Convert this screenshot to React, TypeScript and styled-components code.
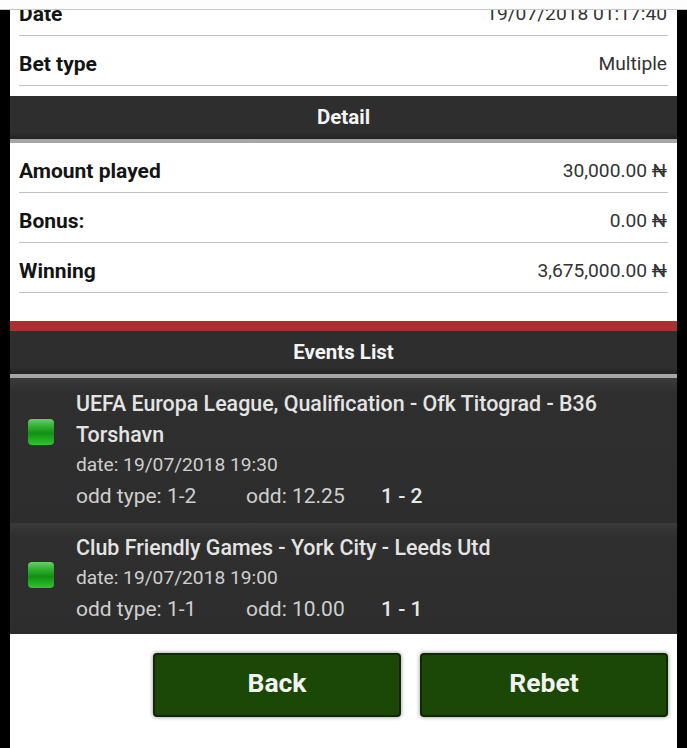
import styled, { createGlobalStyle } from "styled-components";

const GlobalStyle = createGlobalStyle`
  html, body {
    margin: 0;
    padding: 0;
    background: #000;
    font-family: Roboto, "Liberation Sans", sans-serif;
  }
`;

const summary = [
  { label: "Amount played", value: "30,000.00 ₦" },
  { label: "Bonus:", value: "0.00 ₦" },
  { label: "Winning", value: "3,675,000.00 ₦" },
];

const events = [
  {
    title: "UEFA Europa League, Qualification - Ofk Titograd - B36 Torshavn",
    date: "date: 19/07/2018 19:30",
    oddType: "odd type: 1-2",
    odd: "odd: 12.25",
    score: "1 - 2",
  },
  {
    title: "Club Friendly Games - York City - Leeds Utd",
    date: "date: 19/07/2018 19:00",
    oddType: "odd type: 1-1",
    odd: "odd: 10.00",
    score: "1 - 1",
  },
];

export default function App() {
  return (
    <>
      <GlobalStyle />
      <Screen>
        <TopStrip />
        <Sheet>
          <FirstRow>
            <Label>Date</Label>
            <Value>19/07/2018 01:17:40</Value>
          </FirstRow>
          <Row>
            <Label>Bet type</Label>
            <Value>Multiple</Value>
          </Row>
          <SectionBar>Detail</SectionBar>
          <SummaryList>
            {summary.map((item) => (
              <Row key={item.label}>
                <Label>{item.label}</Label>
                <Value>{item.value}</Value>
              </Row>
            ))}
          </SummaryList>
          <RedBand />
          <SectionBar $flush>Events List</SectionBar>
          <EventList>
            {events.map((event) => (
              <EventRow key={event.title}>
                <StatusDot />
                <EventBody>
                  <EventTitle>{event.title}</EventTitle>
                  <EventMeta>{event.date}</EventMeta>
                  <OddLine>
                    <OddType>{event.oddType}</OddType>
                    <Odd>{event.odd}</Odd>
                    <Score>{event.score}</Score>
                  </OddLine>
                </EventBody>
              </EventRow>
            ))}
          </EventList>
          <Actions>
            <ActionButton>Back</ActionButton>
            <ActionButton>Rebet</ActionButton>
          </Actions>
        </Sheet>
      </Screen>
    </>
  );
}

const Screen = styled.div`
  width: 687px;
  height: 748px;
  overflow: hidden;
  background: #000;
  display: flex;
  flex-direction: column;
`;

const TopStrip = styled.div`
  height: 9px;
  flex: none;
  background: #fdfdfd;
  border-bottom: 1px solid #c9c9c9;
  position: relative;
  z-index: 2;
`;

const Sheet = styled.div`
  margin: 0 10px;
  flex: 1;
  background: #fff;
  overflow: hidden;
`;

const Row = styled.div`
  box-sizing: border-box;
  height: 50px;
  margin: 0 9px;
  padding: 6px 1px 0 0;
  display: flex;
  align-items: center;
  justify-content: space-between;
  border-bottom: 1px solid #c2c2c2;
`;

const FirstRow = styled(Row)`
  margin-top: -24px;
`;

const Label = styled.span`
  font-size: 21px;
  font-weight: 700;
  color: #141414;
`;

const Value = styled.span`
  font-size: 19.2px;
  color: #333;
`;

const SectionBar = styled.div<{ $flush?: boolean }>`
  box-sizing: border-box;
  height: 47px;
  padding-bottom: 2px;
  margin-top: ${(p) => (p.$flush ? "0" : "10px")};
  display: flex;
  align-items: center;
  justify-content: center;
  background: linear-gradient(#2e2e2e 85%, #232323 100%);
  border-bottom: 4px solid #a6a6a6;
  color: #f4f4f4;
  font-size: 20.5px;
  font-weight: 700;
`;

const SummaryList = styled.div`
  height: 178px;
`;

const RedBand = styled.div`
  height: 10px;
  background: #a83232;
`;

const EventList = styled.div`
  background: #2e2e2e;
`;

const EventRow = styled.div`
  padding: 9.5px 0 10px;
  display: flex;
  align-items: flex-start;
  background: linear-gradient(#3a3a3a 0, #2f2f2f 14px, #2d2d2d 100%);

  &:first-child {
    padding: 11px 0 12px;
  }
`;

const StatusDot = styled.span`
  width: 26px;
  height: 26px;
  margin: 29.5px 22px 0 18px;
  flex: none;
  border-radius: 4px;
  background: linear-gradient(#66d066 0, #2fae2f 30%, #129012 55%, #2fc42f 100%);
`;

const EventBody = styled.div`
  flex: 1;
  min-width: 0;
  padding-right: 40px;
  line-height: 30.5px;
`;

const EventTitle = styled.div`
  font-size: 21.4px;
  font-weight: 500;
  color: #e4e4e4;
`;

const EventMeta = styled.div`
  font-size: 19.2px;
  color: #cfcfcf;
`;

const OddLine = styled.div`
  display: flex;
  font-size: 21px;
  color: #cfcfcf;
`;

const OddType = styled.span`
  width: 170px;
`;

const Odd = styled.span`
  width: 135px;
`;

const Score = styled.span`
  font-weight: 500;
  color: #e8e8e8;
`;

const Actions = styled.div`
  display: flex;
  justify-content: flex-end;
  gap: 19px;
  padding: 19px 9px 0 0;
`;

const ActionButton = styled.button`
  width: 248px;
  height: 64px;
  padding: 0 0 5px;
  border: 2px solid #12260a;
  border-radius: 4px;
  background: #1b4707;
  box-shadow: 0 0 4px rgba(0, 0, 0, 0.45);
  color: #f2f2f2;
  font-family: inherit;
  font-size: 26.5px;
  font-weight: 700;
`;
